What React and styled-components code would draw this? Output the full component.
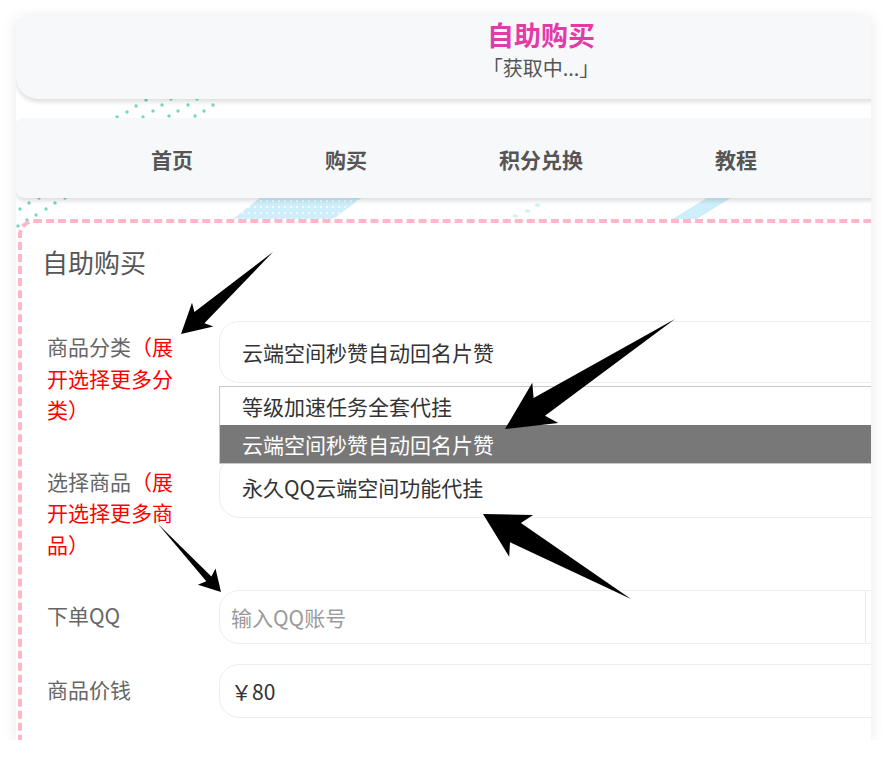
import styled, { createGlobalStyle } from "styled-components";

const Global = createGlobalStyle`
  html, body {
    margin: 0;
    padding: 0;
    background: #ffffff;
  }
  body {
    font-family: "Noto Sans CJK SC", "Noto Sans", sans-serif;
  }
  * {
    box-sizing: border-box;
  }
`;

const Page = styled.div`
  position: relative;
  margin: 16px 0 0 16px;
  width: 855px;
  height: 724px;
  overflow: hidden;
  background: #ffffff;
  box-shadow: 0 2px 14px rgba(0, 0, 0, 0.09);
`;

const Layer = styled.svg`
  position: absolute;
  top: 0;
  left: 0;
  width: 855px;
  height: 724px;
  pointer-events: none;
  z-index: ${(p) => p.$z};
`;

const Inner = styled.div`
  position: relative;
  z-index: 1;
  width: 1050px;
`;

const Header = styled.header`
  height: 83px;
  padding-top: 2px;
  display: flex;
  flex-direction: column;
  align-items: center;
  background: #f7f8fa;
  border-radius: 8px 8px 8px 22px;
  box-shadow: 0 3px 4px rgba(0, 0, 0, 0.13);
`;

const SiteTitle = styled.h1`
  margin: 0;
  font-size: 27px;
  line-height: 34px;
  font-weight: 700;
  color: #e23ba8;
`;

const Notice = styled.div`
  margin-top: 1px;
  font-size: 20px;
  line-height: 30px;
  color: #555;
`;

const Nav = styled.nav`
  margin-top: 19px;
  height: 80px;
  padding: 2px 0 0 135px;
  display: flex;
  align-items: center;
  gap: 132px;
  background: #f7f8fa;
  border-radius: 8px;
  box-shadow: 0 3px 4px rgba(0, 0, 0, 0.13);
`;

const NavItem = styled.a`
  font-size: 21px;
  font-weight: 700;
  color: #555;
  text-decoration: none;
  white-space: nowrap;
`;

const Panel = styled.section`
  margin: 21px 0 0 2px;
  width: 1044px;
  height: 560px;
  background: #ffffff;
  border: 4px dashed #ffb6c6;
  border-radius: 16px 0 0 0;
`;

const PanelHeading = styled.h2`
  margin: 0;
  padding: 19px 20px 0;
  font-size: 26px;
  line-height: 40px;
  font-weight: 400;
  color: #555;
`;

const PanelBody = styled.div`
  padding: 39px 25px 0;
`;

const FormGroup = styled.div`
  display: flex;
  align-items: flex-start;
  margin-bottom: 20px;
`;

const Label = styled.label`
  flex: 0 0 172px;
  padding: 10px 40px 10px 0;
  font-size: 21px;
  line-height: 31.5px;
  color: #666;
`;

const Hint = styled.span`
  color: #ff0000;
`;

const Field = styled.div`
  position: relative;
  flex: 1;
  display: flex;
`;

const SelectBox = styled.div`
  flex: 1;
  height: 62px;
  padding-left: 22px;
  display: flex;
  align-items: center;
  border: 1px solid #ededed;
  border-radius: 20px;
  font-size: 21px;
  color: #333;
  background: #fff;
`;

const Dropdown = styled.ul`
  position: absolute;
  top: calc(100% + 3px);
  left: 0;
  right: 0;
  margin: 0;
  padding: 0;
  list-style: none;
  background: #fff;
  border: 1px solid #c9c9c9;
  z-index: 3;
`;

const Option = styled.li`
  height: 38px;
  padding-left: 22px;
  display: flex;
  align-items: center;
  font-size: 21px;
  color: ${(p) => (p.$active ? "#fff" : "#333")};
  background: ${(p) => (p.$active ? "#787878" : "#fff")};
`;

const TextInput = styled.input`
  flex: 1;
  min-width: 0;
  height: 54px;
  padding: 0 0 0 11px;
  border: 1px solid #ededed;
  border-radius: ${(p) => (p.$joined ? "20px 0 0 20px" : "20px")};
  font-family: "Noto Sans CJK SC", "Noto Sans", sans-serif;
  font-size: 21px;
  color: #333;
  background: #fff;
  outline: none;

  &::placeholder {
    color: #9a9a9a;
  }
`;

const Addon = styled.span`
  flex: 0 0 167px;
  height: 54px;
  border: 1px solid #ededed;
  border-left: none;
  background: #fff;
`;

const dots = [
  [117, 117], [127, 112], [136, 106], [146, 100],
  [143, 117], [153, 111], [162, 105], [171, 99],
  [169, 116], [178, 111], [188, 105], [197, 99],
  [195, 116], [204, 111], [213, 105],
  [20, 209], [29, 203], [39, 198],
  [18, 226], [27, 220], [36, 215], [46, 209], [55, 203], [65, 198],
];

const Decor = () => (
  <Layer $z={0} viewBox="16 16 855 724">
    <defs>
      <pattern id="wd" width="6" height="6" patternUnits="userSpaceOnUse">
        <rect width="6" height="6" fill="#cdeefa" />
        <circle cx="3" cy="3" r="1" fill="#ffffff" />
      </pattern>
    </defs>
    {dots.map(([x, y], i) => (
      <circle key={i} cx={x} cy={y} r="1.7" fill="#74d8be" />
    ))}
    <polygon points="262,196 364,196 332,220 232,220" fill="url(#wd)" />
    <polygon points="710,196 734,196 695,220 671,220" fill="#cdeefa" />
    <polygon points="512,216 515,214 519,216 516,218" fill="#cff4ea" />
    <polygon points="524,211 527,209 531,211 528,213" fill="#cff4ea" />
    <polygon points="534,205 537,203 541,205 538,207" fill="#cff4ea" />
  </Layer>
);

const arrowPoints = (tx, ty, px, py, L, W, w) => {
  const dx = px - tx;
  const dy = py - ty;
  const len = Math.hypot(dx, dy);
  const ux = dx / len;
  const uy = dy / len;
  const nx = -uy;
  const ny = ux;
  const bx = px - ux * L * 0.85;
  const by = py - uy * L * 0.85;
  const hx = px - ux * L;
  const hy = py - uy * L;
  return [
    [tx, ty],
    [bx + (nx * w) / 2, by + (ny * w) / 2],
    [hx + nx * W, hy + ny * W],
    [px, py],
    [hx - nx * W, hy - ny * W],
    [bx - (nx * w) / 2, by - (ny * w) / 2],
  ]
    .map((p) => p.map((v) => v.toFixed(1)).join(","))
    .join(" ");
};

const arrows = [
  [273, 252, 181, 334, 29, 16, 15],
  [675, 319, 505, 429, 48, 24, 21],
  [631, 599, 483, 514, 44, 24, 22],
  [158, 524, 221, 592, 21, 12, 7],
];

const Arrows = () => (
  <Layer $z={4} viewBox="16 16 855 724">
    {arrows.map((a, i) => (
      <polygon key={i} points={arrowPoints(...a)} fill="#000" />
    ))}
  </Layer>
);

const App = () => {
  return (
    <>
      <Global />
      <Page>
        <Decor />
        <Inner>
          <Header>
            <SiteTitle>自助购买</SiteTitle>
            <Notice>「获取中...」</Notice>
          </Header>

          <Nav>
            <NavItem>首页</NavItem>
            <NavItem>购买</NavItem>
            <NavItem>积分兑换</NavItem>
            <NavItem>教程</NavItem>
          </Nav>

          <Panel>
            <PanelHeading>自助购买</PanelHeading>
            <PanelBody>
              <FormGroup>
                <Label>
                  商品分类<Hint>（展</Hint>
                  <br />
                  <Hint>开选择更多分</Hint>
                  <br />
                  <Hint>类）</Hint>
                </Label>
                <Field>
                  <SelectBox>云端空间秒赞自动回名片赞</SelectBox>
                  <Dropdown>
                    <Option>等级加速任务全套代挂</Option>
                    <Option $active>云端空间秒赞自动回名片赞</Option>
                  </Dropdown>
                </Field>
              </FormGroup>

              <FormGroup>
                <Label>
                  选择商品<Hint>（展</Hint>
                  <br />
                  <Hint>开选择更多商</Hint>
                  <br />
                  <Hint>品）</Hint>
                </Label>
                <Field>
                  <SelectBox>永久QQ云端空间功能代挂</SelectBox>
                </Field>
              </FormGroup>

              <FormGroup>
                <Label>下单QQ</Label>
                <Field>
                  <TextInput $joined placeholder="输入QQ账号" readOnly />
                  <Addon />
                </Field>
              </FormGroup>

              <FormGroup>
                <Label>商品价钱</Label>
                <Field>
                  <TextInput value="￥80" readOnly />
                </Field>
              </FormGroup>
            </PanelBody>
          </Panel>
        </Inner>
        <Arrows />
      </Page>
    </>
  );
};

export default App;
